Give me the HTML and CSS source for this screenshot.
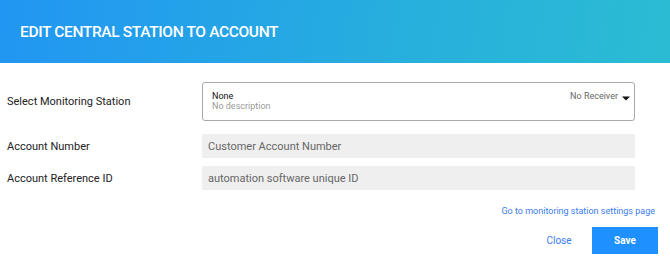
FILE: index.html
```html
<!DOCTYPE html>
<html>
<head>
<meta charset="utf-8">
<link rel="stylesheet" href="styles.css">
</head>
<body>
<div class="dialog">
  <header class="header">
    <h1 class="title">EDIT CENTRAL STATION TO ACCOUNT</h1>
  </header>
  <div class="body">
    <div class="row row-select">
      <label class="label">Select Monitoring Station</label>
      <div class="select">
        <div class="select-main">
          <div class="select-name">None</div>
          <div class="select-desc">No description</div>
        </div>
        <div class="select-side">
          <span class="select-receiver">No Receiver</span>
          <svg class="caret" width="8" height="5" viewBox="0 0 8 5"><path d="M0 0.5 L8 0.5 L4 4.5 Z" fill="#111"/></svg>
        </div>
      </div>
    </div>
    <div class="row row-input">
      <label class="label">Account Number</label>
      <div class="input">Customer Account Number</div>
    </div>
    <div class="row row-input row-last">
      <label class="label">Account Reference ID</label>
      <div class="input">automation software unique ID</div>
    </div>
    <div class="link-row">
      <a class="link">Go to monitoring station settings page</a>
    </div>
    <div class="actions">
      <button class="btn btn-close">Close</button>
      <button class="btn btn-save">Save</button>
    </div>
  </div>
</div>
</body>
</html>
```
FILE: styles.css
```css
html, body {
  margin: 0;
  padding: 0;
  background: #fff;
  font-family: Roboto, "Liberation Sans", sans-serif;
}
.dialog {
  width: 670px;
}
.header {
  height: 63px;
  display: flex;
  align-items: center;
  padding-left: 20px;
  box-sizing: border-box;
  background: linear-gradient(100deg, #2196f3 0%, #27afdd 60%, #2bbcd3 100%);
}
.title {
  margin: 0;
  color: #fff;
  font-size: 15.5px;
  font-weight: 500;
  letter-spacing: -0.35px;
  padding-top: 1px;
}
.body {
  padding: 19px 12px 0 7px;
}
.row {
  display: flex;
  align-items: center;
}
.label {
  width: 195px;
  font-size: 11px;
  color: #222;
}
.row-select {
  margin-bottom: 13px;
}
.select {
  width: 433px;
  height: 39px;
  box-sizing: border-box;
  border: 1px solid #aaa;
  border-radius: 3px;
  display: flex;
  justify-content: space-between;
  align-items: flex-start;
  padding: 8px 4px 0 9px;
}
.select-name {
  font-size: 9px;
  color: #111;
  line-height: 10px;
}
.select-desc {
  font-size: 9px;
  color: #999;
  line-height: 10px;
}
.select-side {
  display: flex;
  align-items: flex-start;
}
.select-receiver {
  font-size: 9px;
  color: #666;
  line-height: 10px;
}
.caret {
  margin-left: 4px;
  margin-top: 5px;
}
.row-input {
  margin-bottom: 8px;
}
.input {
  width: 433px;
  height: 24px;
  box-sizing: border-box;
  background: #efefef;
  padding-left: 6px;
  display: flex;
  align-items: center;
  font-size: 11px;
  color: #666;
}
.link-row {
  display: flex;
  justify-content: flex-end;
  margin-top: 16px;
  padding-right: 3px;
}
.link {
  font-size: 9px;
  color: #3b7cf0;
}
.actions {
  display: flex;
  justify-content: flex-end;
  align-items: center;
  margin-top: 11px;
}
.btn {
  border: none;
  font-family: Roboto, "Liberation Sans", sans-serif;
  font-size: 10px;
  cursor: pointer;
  padding: 0;
}
.btn-close {
  background: none;
  color: #3b7cf0;
  width: 26px;
  margin-right: 20px;
}
.btn-save {
  background: #1e90ff;
  color: #fff;
  font-weight: 700;
  width: 66px;
  height: 27px;
}
```
